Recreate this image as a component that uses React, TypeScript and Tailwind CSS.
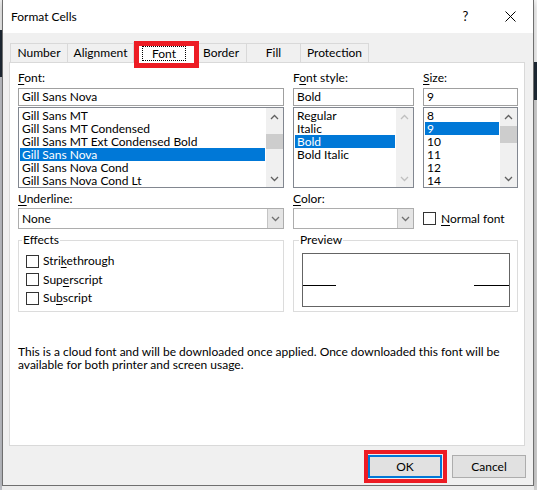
import React from "react";

const font = "font-['Lato','Noto_Sans',sans-serif]";

function Chevron({ dir }: { dir: "up" | "down" }) {
  return (
    <svg width="9" height="6" viewBox="0 0 9 6">
      <path
        d={dir === "up" ? "M1 5 L4.5 1.5 L8 5" : "M1 1 L4.5 4.5 L8 1"}
        fill="none"
        stroke="currentColor"
        strokeWidth="1.3"
      />
    </svg>
  );
}

function Scrollbar({ thumb, disabled }: { thumb?: string; disabled?: boolean }) {
  const arrow = disabled ? "text-[#bfbfbf]" : "text-[#606060]";
  return (
    <div className="w-[17px] bg-[#f0f0f0] flex flex-col">
      <div className={`h-[17px] flex items-center justify-center ${arrow}`}>
        <Chevron dir="up" />
      </div>
      <div className="flex-1">{thumb && <div className={`bg-[#cdcdcd] ${thumb}`} />}</div>
      <div className={`h-[17px] flex items-center justify-center ${arrow}`}>
        <Chevron dir="down" />
      </div>
    </div>
  );
}

function ListBox({
  items,
  selected,
  scroll,
}: {
  items: string[];
  selected: number;
  scroll: React.ReactNode;
}) {
  return (
    <div className="mt-[1px] h-[81px] border border-[#828790] bg-white flex">
      <div className="flex-1 pt-[1px] pl-[1px] pr-[1px] overflow-hidden">
        {items.map((it, i) => (
          <div
            key={it}
            className={`h-[13px] leading-[13px] pl-[2px] whitespace-nowrap ${
              i === selected ? "bg-[#0078d7] text-white" : ""
            }`}
          >
            {it}
          </div>
        ))}
      </div>
      {scroll}
    </div>
  );
}

function TextBox({ value }: { value: string }) {
  return (
    <div className="mt-[3px] h-[18px] border border-[#a0a0a0] bg-white pl-[3px] leading-[16px]">
      {value}
    </div>
  );
}

function Combo({ value }: { value?: string }) {
  return (
    <div className="mt-[2px] h-[21px] border border-[#adadad] bg-white flex">
      <div className="flex-1 pl-[3px] leading-[19px]">{value}</div>
      <div className="w-[16px] bg-[#e5e5e5] border-l border-[#c4c4c4] flex items-center justify-center text-[#707070]">
        <Chevron dir="down" />
      </div>
    </div>
  );
}

function Label({ pre, u, post }: { pre?: string; u: string; post?: string }) {
  return (
    <div className="h-[14px] leading-[14px] whitespace-nowrap">
      {pre}
      <span className="underline underline-offset-[2px]">{u}</span>
      {post}
    </div>
  );
}

function Check() {
  return <span className="w-[13px] h-[13px] border border-[#333333] bg-white shrink-0" />;
}

function CheckRow({ pre, u, post }: { pre: string; u: string; post: string }) {
  return (
    <div className="h-[18.5px] flex items-center gap-[4px]">
      <Check />
      <span>
        {pre}
        <span className="underline underline-offset-[2px]">{u}</span>
        {post}
      </span>
    </div>
  );
}

function Tabs() {
  const base = "h-[19px] border-t border-l border-[#d9d9d9] bg-[#f0f0f0] flex items-center justify-center";
  return (
    <div className="ml-[7px] h-[19px] flex items-end">
      <div className={`${base} w-[57px]`}>Number</div>
      <div className={`${base} w-[66px]`}>Alignment</div>
      <div className="relative z-10 w-[62px] h-[21px] -mb-[1px] bg-white border-t border-l border-r border-[#d9d9d9] flex items-center justify-center">
        <span className="border border-dotted border-black px-[9px] leading-[13px]">Font</span>
        <div className="absolute left-0 -right-[5px] -top-[2px] -bottom-[5px] border-[5px] border-[#ed1c24]" />
      </div>
      <div className={`${base} w-[51px]`}>Border</div>
      <div className={`${base} w-[54px]`}>Fill</div>
      <div className={`${base} w-[69px] border-r`}>Protection</div>
    </div>
  );
}

function Panel() {
  return (
    <div className="ml-[6px] w-[516px] h-[384px] border border-[#d9d9d9] bg-white pt-[8px] pl-[8px]">
      <div className="flex gap-[9px]">
        <div className="w-[266px] flex flex-col">
          <Label u="F" post="ont:" />
          <TextBox value="Gill Sans Nova" />
          <ListBox
            items={[
              "Gill Sans MT",
              "Gill Sans MT Condensed",
              "Gill Sans MT Ext Condensed Bold",
              "Gill Sans Nova",
              "Gill Sans Nova Cond",
              "Gill Sans Nova Cond Lt",
            ]}
            selected={3}
            scroll={<Scrollbar thumb="mt-[9px] h-[15px]" />}
          />
          <div className="mt-[4px]">
            <Label u="U" post="nderline:" />
          </div>
          <Combo value="None" />
        </div>
        <div className="w-[121px] flex flex-col">
          <Label pre="F" u="o" post="nt style:" />
          <TextBox value="Bold" />
          <ListBox
            items={["Regular", "Italic", "Bold", "Bold Italic"]}
            selected={2}
            scroll={<Scrollbar disabled />}
          />
          <div className="mt-[4px]">
            <Label u="C" post="olor:" />
          </div>
          <Combo />
        </div>
        <div className="w-[95px] flex flex-col">
          <Label u="S" post="ize:" />
          <TextBox value="9" />
          <ListBox
            items={["8", "9", "10", "11", "12", "14"]}
            selected={1}
            scroll={<Scrollbar thumb="mt-[1px] h-[17px]" />}
          />
          <div className="mt-[20px] h-[21px] flex items-center gap-[5px]">
            <Check />
            <span className="whitespace-nowrap">
              <span className="underline underline-offset-[2px]">N</span>ormal font
            </span>
          </div>
        </div>
      </div>

      <div className="mt-[4px] flex gap-[9px]">
        <fieldset className="w-[266px] h-[79px] border border-[#dcdcdc]">
          <legend className="ml-[3px] px-[1px] leading-[14px]">Effects</legend>
          <div className="mt-[5px] pl-[7px]">
            <CheckRow pre="Stri" u="k" post="ethrough" />
            <CheckRow pre="Sup" u="e" post="rscript" />
            <CheckRow pre="Su" u="b" post="script" />
          </div>
        </fieldset>
        <fieldset className="w-[225px] h-[79px] border border-[#dcdcdc]">
          <legend className="ml-[5px] px-[1px] leading-[14px]">Preview</legend>
          <div className="mt-[6px] ml-[8px] mr-[7px] h-[54px] border border-[#646464] flex justify-between">
            <div className="mt-[31px] h-[1px] w-[33px] bg-black" />
            <div className="mt-[31px] h-[1px] w-[35px] bg-black" />
          </div>
        </fieldset>
      </div>

      <div className="mt-[33px] leading-[13px] whitespace-nowrap">
        <div>This is a cloud font and will be downloaded once applied. Once downloaded this font will be</div>
        <div>available for both printer and screen usage.</div>
      </div>
    </div>
  );
}

function Dialog() {
  return (
    <div className="h-[486px] border-l border-r border-b border-[#6f6f6f] bg-[#f0f0f0] flex flex-col shadow-[0_2px_8px_rgba(0,0,0,0.25)]">
      <div className="h-[33px] bg-white flex items-center">
        <div className="pl-[8px] flex-1">Format Cells</div>
        <div className="w-[45px] text-center text-[13px]">?</div>
        <div className="w-[45px] flex items-center justify-center">
          <svg width="11" height="11" viewBox="0 0 11 11">
            <path d="M0.5 0.5 L10.5 10.5 M10.5 0.5 L0.5 10.5" stroke="#000" strokeWidth="1" />
          </svg>
        </div>
      </div>
      <div className="pt-[10px]">
        <Tabs />
        <Panel />
        <div className="mt-[9px] pr-[7px] flex justify-end gap-[10px]">
          <div className="relative">
            <div className="w-[74px] h-[23px] bg-[#e1e1e1] border-2 border-[#0078d7] flex items-center justify-center">
              OK
            </div>
            <div className="absolute -left-[4px] -right-[5px] -top-[5px] -bottom-[5px] border-4 border-[#ed1c24]" />
          </div>
          <div className="w-[74px] h-[23px] bg-[#e1e1e1] border border-[#adadad] flex items-center justify-center">
            Cancel
          </div>
        </div>
      </div>
    </div>
  );
}

export default function App() {
  return (
    <div className={`w-[537px] h-[490px] overflow-hidden bg-[#e6e6e6] flex ${font} text-[12px] text-black`}>
      <div className="w-[2px] flex flex-col">
        <div className="h-[30px] bg-[#f2f2f2]" />
        <div className="h-[47px] bg-[#1f2a36]" />
        <div className="flex-1 bg-[#c3c5cb]" />
      </div>
      <div className="w-[532px] flex flex-col relative z-10">
        <Dialog />
        <div className="flex-1 bg-[#ececec]" />
      </div>
      <div className="flex-1 flex flex-col">
        <div className="h-[62px] bg-[#f7f7f7]" />
        <div className="h-[38px] bg-[#1f2a36]" />
        <div className="flex-1 bg-[#d6d6d6]" />
      </div>
    </div>
  );
}
